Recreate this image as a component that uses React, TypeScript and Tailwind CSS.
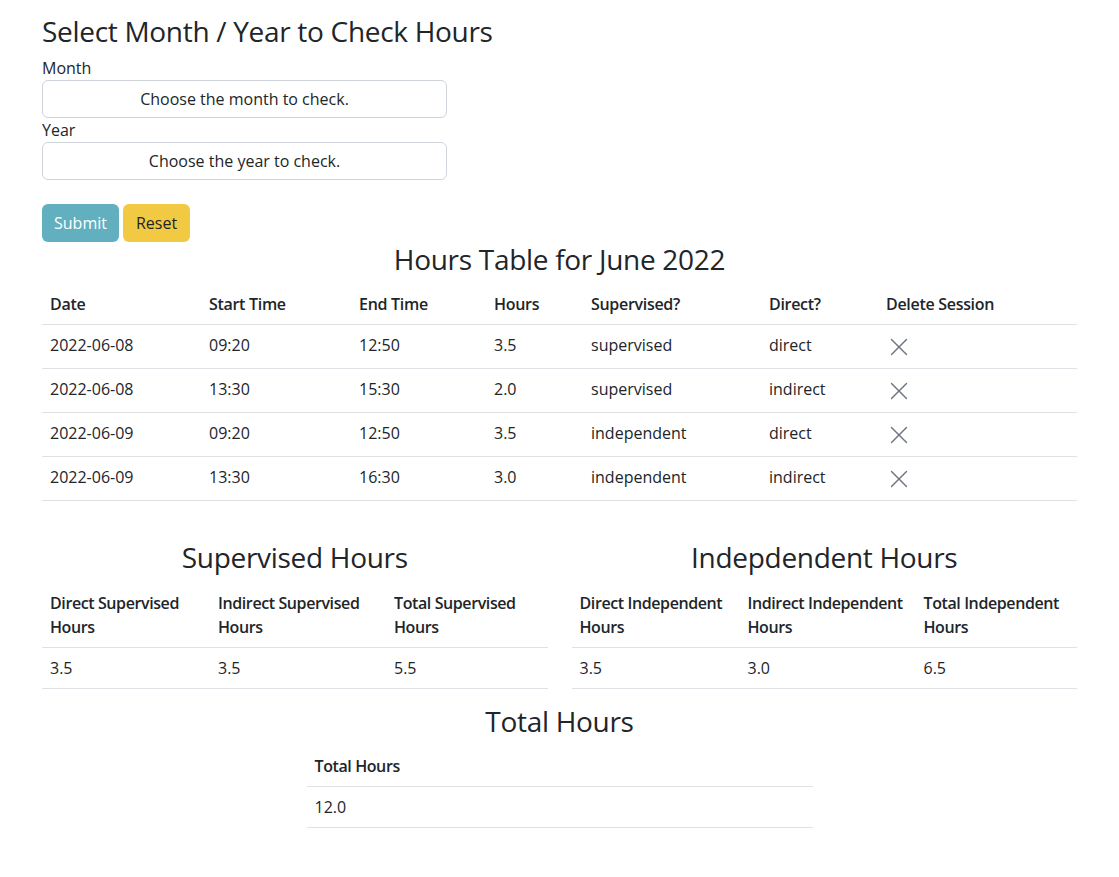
import React from 'react';

type Session = {
  date: string;
  start: string;
  end: string;
  hours: string;
  supervised: string;
  direct: string;
};

const SESSIONS: Session[] = [
  { date: '2022-06-08', start: '09:20', end: '12:50', hours: '3.5', supervised: 'supervised', direct: 'direct' },
  { date: '2022-06-08', start: '13:30', end: '15:30', hours: '2.0', supervised: 'supervised', direct: 'indirect' },
  { date: '2022-06-09', start: '09:20', end: '12:50', hours: '3.5', supervised: 'independent', direct: 'direct' },
  { date: '2022-06-09', start: '13:30', end: '16:30', hours: '3.0', supervised: 'independent', direct: 'indirect' },
];

const CloseIcon: React.FC = () => (
  <svg width="18" height="18" viewBox="0 0 18 18" fill="none" stroke="#6c757d" strokeWidth="1.4" strokeLinecap="round">
    <path d="M1.5 1.5 L16.5 16.5" />
    <path d="M16.5 1.5 L1.5 16.5" />
  </svg>
);

const Heading: React.FC<{ children: React.ReactNode; center?: boolean }> = ({ children, center }) => (
  <h3 className={`text-[28px] leading-[1.2] font-normal tracking-[-0.3px] mb-2 ${center ? 'text-center' : ''}`}>{children}</h3>
);

const SummaryTable: React.FC<{ heads: string[]; widths: string[]; values: string[] }> = ({ heads, widths, values }) => (
  <table className="w-full border-collapse table-fixed mb-4">
    <thead>
      <tr className="border-b border-[#dee2e6]">
        {heads.map((h, i) => (
          <th key={h} className={`${widths[i]} text-left font-semibold tracking-[-0.4px] p-2 align-bottom`}>{h}</th>
        ))}
      </tr>
    </thead>
    <tbody>
      <tr className="border-b border-[#dee2e6]">
        {values.map((v, i) => (
          <td key={i} className="p-2">{v}</td>
        ))}
      </tr>
    </tbody>
  </table>
);

const App: React.FC = () => {
  return (
    <div className="min-h-screen bg-white text-[#212529] text-base leading-6 px-[42px] pt-[15px] pb-10" style={{ fontFamily: '"Open Sans", sans-serif' }}>
      <Heading>Select Month / Year to Check Hours</Heading>

      <form className="w-[405px]">
        <label className="block -mt-px">Month</label>
        <div className="h-[38px] border border-[#ced4da] rounded-md flex items-center justify-center">
          Choose the month to check.
        </div>
        <label className="block">Year</label>
        <div className="h-[38px] border border-[#ced4da] rounded-md flex items-center justify-center">
          Choose the year to check.
        </div>
        <div className="flex gap-1 mt-6">
          <button type="button" className="h-[38px] px-3 rounded-md bg-[#62afc0] text-white">Submit</button>
          <button type="button" className="h-[38px] px-[13px] rounded-md bg-[#f1c942] text-[#212529]">Reset</button>
        </div>
      </form>

      <div className="mt-px">
        <Heading center>Hours Table for June 2022</Heading>
      </div>
      <table className="w-full border-collapse table-fixed mb-4">
        <thead>
          <tr className="border-b border-[#dee2e6]">
            <th className="w-[159px] text-left font-semibold tracking-[-0.3px] p-2">Date</th>
            <th className="w-[150px] text-left font-semibold tracking-[-0.3px] p-2">Start Time</th>
            <th className="w-[135px] text-left font-semibold tracking-[-0.3px] p-2">End Time</th>
            <th className="w-[97px] text-left font-semibold tracking-[-0.3px] p-2">Hours</th>
            <th className="w-[178px] text-left font-semibold tracking-[-0.3px] p-2">Supervised?</th>
            <th className="w-[117px] text-left font-semibold tracking-[-0.3px] p-2">Direct?</th>
            <th className="text-left font-semibold tracking-[-0.3px] p-2">Delete Session</th>
          </tr>
        </thead>
        <tbody>
          {SESSIONS.map((s, i) => (
            <tr key={i} className="border-b border-[#dee2e6] h-[44px]">
              <td className="px-2 pb-[3px]">{s.date}</td>
              <td className="px-2 pb-[3px]">{s.start}</td>
              <td className="px-2 pb-[3px]">{s.end}</td>
              <td className="px-2 pb-[3px]">{s.hours}</td>
              <td className="px-2 pb-[3px]">{s.supervised}</td>
              <td className="px-2 pb-[3px]">{s.direct}</td>
              <td className="px-2">
                <button type="button" className="flex items-center justify-center pl-1">
                  <CloseIcon />
                </button>
              </td>
            </tr>
          ))}
        </tbody>
      </table>

      <div className="grid grid-cols-2 gap-6 mt-10">
        <div>
          <Heading center>Supervised Hours</Heading>
          <SummaryTable
            heads={['Direct Supervised Hours', 'Indirect Supervised Hours', 'Total Supervised Hours']}
            widths={['w-[168px]', 'w-[176px]', '']}
            values={['3.5', '3.5', '5.5']}
          />
        </div>
        <div>
          <Heading center>Indepdendent Hours</Heading>
          <SummaryTable
            heads={['Direct Independent Hours', 'Indirect Independent Hours', 'Total Independent Hours']}
            widths={['w-[168px]', 'w-[176px]', '']}
            values={['3.5', '3.0', '6.5']}
          />
        </div>
      </div>

      <div className="w-[506px] mx-auto">
        <Heading center>Total Hours</Heading>
        <SummaryTable heads={['Total Hours']} widths={['']} values={['12.0']} />
      </div>
    </div>
  );
};

export default App;
